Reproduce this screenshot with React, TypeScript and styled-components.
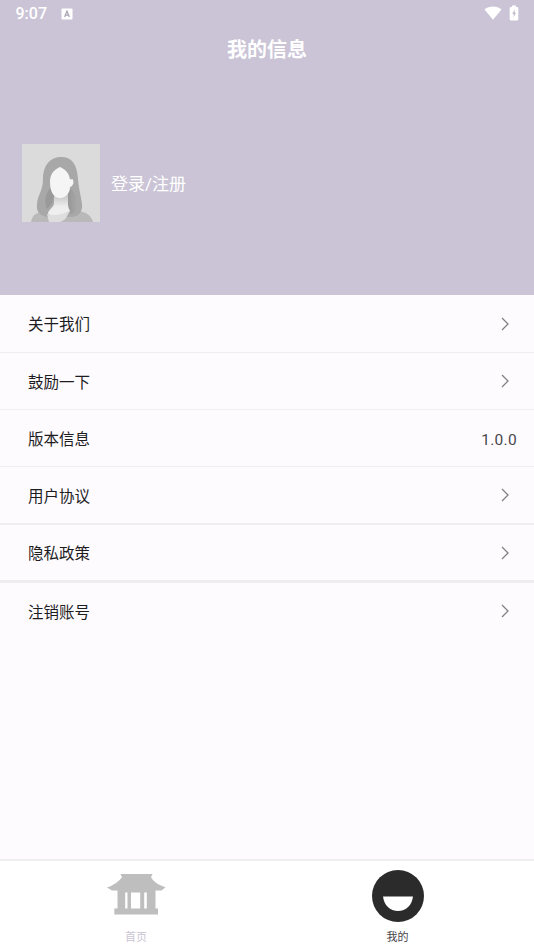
import React from "react";
import styled, { createGlobalStyle } from "styled-components";

const GlobalStyle = createGlobalStyle`
  * { box-sizing: border-box; }
  body { margin: 0; background: #fefbff; font-family: Roboto, "Noto Sans CJK SC", sans-serif; }
`;

const Screen = styled.div`
  display: flex;
  flex-direction: column;
  width: 534px;
  height: 950px;
  overflow: hidden;
  background: #fefbff;
`;

const Header = styled.header`
  display: flex;
  flex-direction: column;
  flex: none;
  height: 295px;
  background: #cac4d6;
  color: #fff;
`;

const StatusBar = styled.div`
  display: flex;
  align-items: center;
  height: 27px;
  padding: 0 15px;
`;

const Clock = styled.span`
  width: 46px;
  padding-left: 0.5px;
  font-size: 16px;
  font-weight: 500;
  line-height: 27px;
`;

const StatusIcons = styled.div`
  display: flex;
  align-items: center;
  gap: 7px;
  margin-left: auto;
  height: 25px;
  align-self: flex-start;
`;

const Title = styled.h1`
  margin: 0;
  padding-top: 1px;
  height: 44px;
  font-size: 20px;
  font-weight: 700;
  line-height: 44px;
  text-align: center;
`;

const Profile = styled.div`
  display: flex;
  align-items: center;
  gap: 11px;
  margin-top: 73px;
  padding-left: 22px;
`;

const LoginLabel = styled.span`
  font-size: 17px;
  line-height: 24px;
  padding-top: 2px;
`;

const Menu = styled.main`
  flex: 1;
`;

const MenuRow = styled.div<{ $height: number; $line: number }>`
  display: flex;
  align-items: center;
  justify-content: space-between;
  height: ${(p) => p.$height}px;
  padding: 0 24px 0 28px;
  border-bottom: ${(p) => p.$line}px solid #efedf1;
`;

const MenuLabel = styled.span`
  color: #1d1c1e;
  font-size: 15.5px;
  line-height: 24px;
  padding-top: 3px;
`;

const Version = styled.span`
  margin-right: -7px;
  padding-top: 3px;
  color: #49474b;
  font-size: 15.5px;
  letter-spacing: 0.3px;
`;

const TabBar = styled.nav`
  display: grid;
  grid-template-columns: 272px 1fr;
  flex: none;
  height: 91px;
  border-top: 2px solid #efedf2;
  background: #fff;
`;

const Tab = styled.div<{ $active?: boolean }>`
  display: flex;
  flex-direction: column;
  align-items: center;
  padding-right: ${(p) => (p.$active ? 11 : 0)}px;
  padding-top: 8px;
  color: ${(p) => (p.$active ? "#454447" : "#c9c4d4")};
  font-size: 11px;
  line-height: 16px;
  gap: 7px;
`;

const AppBadge = () => (
  <svg width="12" height="12" viewBox="0 0 12 12">
    <rect x="0.5" y="0.5" width="11" height="11" rx="1" fill="#fff" />
    <path d="M3.6 9 6 3l2.4 6M4.5 7.2h3" fill="none" stroke="#aaa5b3" strokeWidth="1.2" />
  </svg>
);

const Wifi = () => (
  <svg width="18" height="14" viewBox="0 0 18 14">
    <path d="M.5 3.4C5.3-.4 12.7-.4 17.5 3.4L9 13.7Z" fill="#fff" />
  </svg>
);

const Battery = () => (
  <svg width="10" height="16" viewBox="0 0 10 16">
    <path d="M3 .5h4V2h1q1.3 0 1.3 1.3v10.9q0 1.3-1.3 1.3H2q-1.3 0-1.3-1.3V3.3Q.7 2 2 2h1Z" fill="#fff" />
    <path d="M5.6 4.5 3.3 8.8h1.4v3.4l2.2-4.5H5.6Z" fill="#bdb8c7" />
  </svg>
);

const Avatar = () => (
  <svg width="78" height="78" viewBox="0 0 78 78">
    <defs>
      <linearGradient id="neck" x1="0" y1="0" x2="0" y2="1">
        <stop offset="0" stopColor="#c2c2c2" />
        <stop offset="0.55" stopColor="#ededed" />
        <stop offset="1" stopColor="#f0f0f0" />
      </linearGradient>
      <linearGradient id="lock" x1="0" y1="0" x2="1" y2="0">
        <stop offset="0" stopColor="#939393" />
        <stop offset="1" stopColor="#a9a9a9" />
      </linearGradient>
    </defs>
    <rect width="78" height="78" fill="#dadbda" />
    <path d="M9 78c1-5 3-8 7-9l12-2h28c8 1 13 4 15 11Z" fill="#b9b9b9" />
    <path d="M39 13c-12 0-18 10-18 22 0 12-6 17-6 26-1 7 3 10 10 12h22c9 1 14-5 13-13-1-8-3-14-4-25-1-15-6-22-17-22Z" fill="#a8a8a8" />
    <path d="M28 44c-5 7-6 14-3 21l3-3c3-4 4-8 4-12Z" fill="#999" />
    <path d="M47 44c4 2 6 6 8 10 3 8-1 14-6 16-3-4-6-9-5-17Z" fill="url(#lock)" />
    <path d="M32 50h14v10c0 3 1 5 2 7-4 6-15 7-22 3 0-4 5-6 6-10Z" fill="url(#neck)" />
    <path d="M25 70q10 3 22-3c-1 6-5 10-9 11H27Z" fill="#dedede" />
    <path d="M38 23c-7 3-10 8-10 15 0 10 4 16 10 16 6 0 10-5 10-11 4-1 4-6 2.500-8l-2.500 .5c-1-6-4-10-10-12.5Z" fill="#f4f5f4" />
  </svg>
);

const Chevron = () => (
  <svg width="10" height="16" viewBox="0 0 10 16">
    <path d="m2 2 6 6-6 6" fill="none" stroke="#818083" strokeWidth="1.3" />
  </svg>
);

const Temple = () => (
  <svg width="60" height="54" viewBox="0 0 60 54">
    <path
      d="M14.5 5h32L45 8.200Q48.500 15 59.500 18.200L55.500 21.500H49.500V39.500H52V45.500H8.300V39.500H11.500V21.500H6L1 18.500Q11 15 16 8.200ZM19.200 23.500v16h2.300v-16ZM25 23.500v16h9.200v-16ZM38.200 23.500v16h2.600v-16Z"
      fill="#bfbebf"
      fillRule="evenodd"
    />
  </svg>
);

const Smile = () => (
  <svg width="54" height="54" viewBox="0 0 54 54">
    <circle cx="27" cy="27" r="26" fill="#2b2b2b" />
    <path d="M12 27.4h30C41 36 35 42 27 42S13 36 12 27.4Z" fill="#fff" />
  </svg>
);

const items = [
  { label: "关于我们", height: 58, line: 1 },
  { label: "鼓励一下", height: 57, line: 1 },
  { label: "版本信息", height: 57, line: 1, value: "1.0.0" },
  { label: "用户协议", height: 58, line: 2 },
  { label: "隐私政策", height: 58, line: 3 },
  { label: "注销账号", height: 56, line: 0 },
];

export default function App() {
  return (
    <Screen>
      <GlobalStyle />
      <Header>
        <StatusBar>
          <Clock>9:07</Clock>
          <AppBadge />
          <StatusIcons>
            <Wifi />
            <Battery />
          </StatusIcons>
        </StatusBar>
        <Title>我的信息</Title>
        <Profile>
          <Avatar />
          <LoginLabel>登录/注册</LoginLabel>
        </Profile>
      </Header>
      <Menu>
        {items.map((item) => (
          <MenuRow key={item.label} $height={item.height} $line={item.line}>
            <MenuLabel>{item.label}</MenuLabel>
            {item.value ? <Version>{item.value}</Version> : <Chevron />}
          </MenuRow>
        ))}
      </Menu>
      <TabBar>
        <Tab>
          <Temple />
          首页
        </Tab>
        <Tab $active>
          <Smile />
          我的
        </Tab>
      </TabBar>
    </Screen>
  );
}
